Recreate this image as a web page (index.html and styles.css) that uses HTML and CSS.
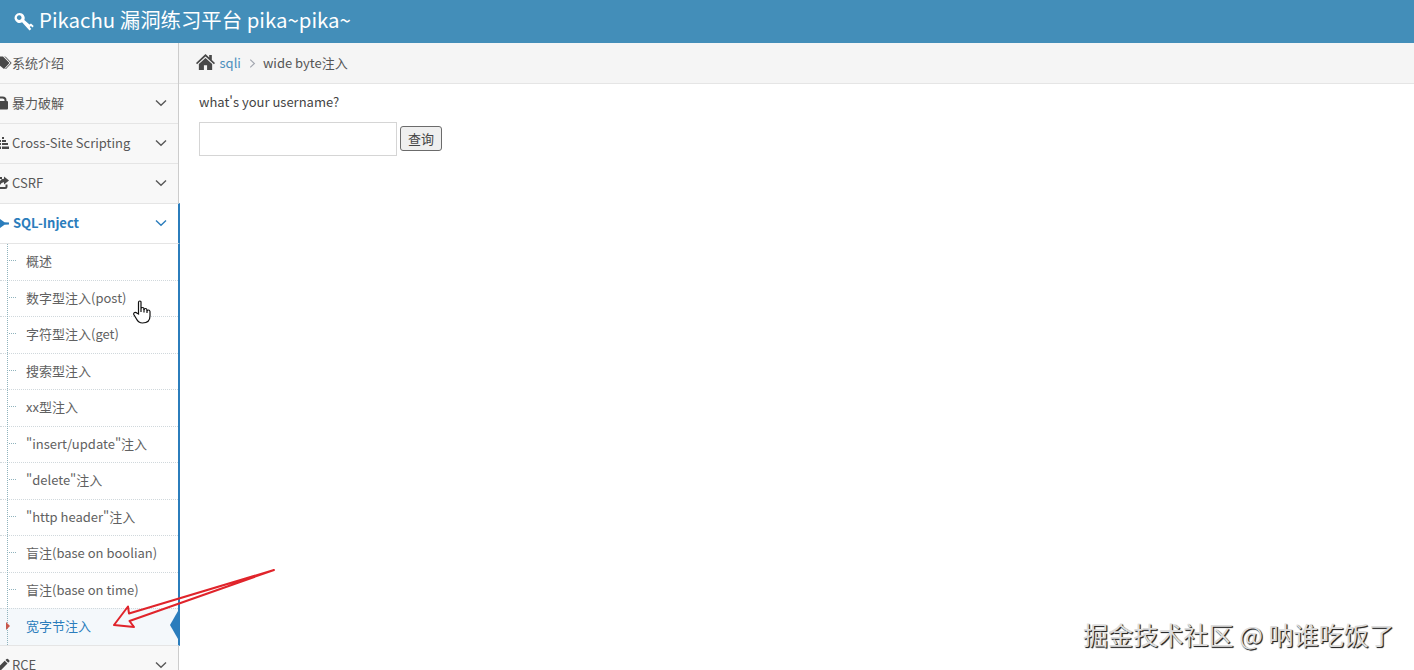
FILE: index.html
```html
<!DOCTYPE html>
<html lang="zh-CN">
<head>
    <meta charset="UTF-8">
    <meta name="viewport" content="width=device-width, initial-scale=1.0">
    <title>Get the pikachu</title>
    <link rel="stylesheet" href="styles.css">
</head>
<body>

    <div class="navbar">
        <svg class="key" viewBox="0 0 20 20"><path fill-rule="evenodd" d="M6 1a5 5 0 1 0 2.600 9.300l7.400 8.200 1.800-1.600-1.600-1.800 1.300-1.200 1.500 1.500 1.200-1.300-2.700-2.500-1.500.9-5.200-4.500A5 5 0 0 0 6 1zM5.600 3.300a2.300 2.300 0 0 1 1.900 3.700 2.300 2.300 0 1 1-1.900-3.700z"/></svg>
        <span>Pikachu 漏洞练习平台 pika~pika~</span>
    </div>

    <div class="main">
        <div class="sidebar">
            <div class="item first">
                <svg class="icon" viewBox="0 0 12 14"><path d="M0 .5h3L9.500 7 4 13 0 9.800z"/><path class="line" d="M5 .5L11.200 7l-5.700 6"/></svg>
                <span>系统介绍</span>
            </div>
            <div class="item">
                <svg class="icon" viewBox="0 0 12 14"><path d="M0 5h7q1 0 1 1v6.500q0 1-1 1H0z"/><path class="thick" d="M-1 1.500h3.500Q5.500 1.500 5.500 4v2"/></svg>
                <span>暴力破解</span>
                <svg class="arrow" viewBox="0 0 12 8"><path d="M1 1.500l5 4.700 5-4.700"/></svg>
            </div>
            <div class="item">
                <svg class="icon" viewBox="0 0 12 14"><path d="M2 1h2v2H2zM2 4h4v2H2zM2 7h6v2H2zM2 10.500h7v2.500H2zM0 4h1v2H0zM0 7h1v2H0zM0 10.500h1V13H0z"/></svg>
                <span>Cross-Site Scripting</span>
                <svg class="arrow" viewBox="0 0 12 8"><path d="M1 1.500l5 4.700 5-4.700"/></svg>
            </div>
            <div class="item">
                <svg class="icon" viewBox="0 0 12 14"><path d="M4 .5l5 4-5 4V6.200Q1.500 6 0 9V5q1-2.200 4-2.200z"/><path class="thick" d="M-1 12h6q1.500 0 1.500-1.500V8.500M-1 2h3"/></svg>
                <span>CSRF</span>
                <svg class="arrow" viewBox="0 0 12 8"><path d="M1 1.500l5 4.700 5-4.700"/></svg>
            </div>
            <div class="item active">
                <svg class="icon" viewBox="0 0 12 14"><path d="M0 3l4.500 3.200 4.500.3v2l-4.500.3L0 12z"/></svg>
                <span>SQL-Inject</span>
                <svg class="arrow" viewBox="0 0 12 8"><path d="M1 1.500l5 4.700 5-4.700"/></svg>
            </div>
            <div class="submenu">
                <div class="sub">概述</div>
                <div class="sub">数字型注入(post)</div>
                <div class="sub">字符型注入(get)</div>
                <div class="sub">搜索型注入</div>
                <div class="sub">xx型注入</div>
                <div class="sub">"insert/update"注入</div>
                <div class="sub">"delete"注入</div>
                <div class="sub">"http header"注入</div>
                <div class="sub">盲注(base on boolian)</div>
                <div class="sub">盲注(base on time)</div>
                <div class="sub current">宽字节注入</div>
            </div>
            <div class="item last">
                <svg class="icon" viewBox="0 0 12 14"><path d="M0 7.500l4.700-4.700L7.500 5.600l-7 7H0zM5.500 2L6.500 1q.8-.6 1.500 0l1.200 1.200q.7.700 0 1.500l-1 1z"/></svg>
                <span>RCE</span>
                <svg class="arrow" viewBox="0 0 12 8"><path d="M1 1.500l5 4.700 5-4.700"/></svg>
            </div>
        </div>

        <div class="content">
            <div class="breadcrumb">
                <svg class="home" viewBox="0 0 18 16"><path d="M9 0l3.500 3.300V1H15v4.700L18 8.500l-1 1.100-8-7.200-8 7.200L0 8.500z"/><path d="M9 3.800l6.300 5.600V15h-4.800v-4.500h-3V15H2.700V9.400z"/></svg>
                <a href="#">sqli</a>
                <svg class="sep" viewBox="0 0 6 8"><path d="M1 .5L4.700 4 1 7.500"/></svg>
                <span>wide byte注入</span>
            </div>
            <div class="page">
                <p>what's your username?</p>
                <form class="query">
                    <input type="text" name="name">
                    <button type="button">查询</button>
                </form>
            </div>
        </div>
    </div>

    <svg class="cursor" viewBox="0 0 18 24"><path d="M5.500 14V2.500q0-1.500 1.300-1.500T8 2.500V9q0-1.500 1.500-1.500T11 9v.8q.2-1.300 1.500-1.300T14 10v1q.3-1 1.500-1t1.500 1.500V16q0 7-7.500 7Q5.500 23 3.500 19L.8 14.500q-.4-1.500.8-2t2.200.5z"/><path d="M8 9v3M11 9v3.500M14 10.500V13"/></svg>
    <svg class="pointer" viewBox="0 0 170 64"><path d="M163 4L18 47.500l-1-7L3 59l20 2-4.500-6z"/></svg>
    <div class="watermark">掘金技术社区 @ 呐谁吃饭了</div>

</body>
</html>
```
FILE: styles.css
```css
* {
    box-sizing: border-box;
}
body {
    margin: 0;
    height: 670px;
    overflow: hidden;
    font-family: "Noto Sans CJK SC", sans-serif;
    font-size: 13px;
    color: #444;
    background: #fff;
}
.navbar {
    display: flex;
    align-items: center;
    gap: 5px;
    height: 43px;
    padding: 0 0 5px 13px;
    background: #438eb9;
    color: #fff;
    font-size: 20.4px;
}
.key {
    width: 21px;
    height: 20px;
    margin-top: 5px;
    fill: #fff;
}
.main {
    display: flex;
    height: 627px;
}
.sidebar {
    width: 179px;
    flex: none;
    background: #f8f8f8;
    border-right: 1px solid #ccc;
}
.item {
    display: flex;
    align-items: center;
    height: 40px;
    padding: 0 11px 2px 0;
    line-height: 18px;
    border-bottom: 1px solid #e5e5e5;
    color: #585858;
}
.first {
    height: 41px;
    padding-bottom: 1px;
}
.last {
    padding-bottom: 0;
}
.icon {
    width: 12px;
    height: 14px;
    flex: none;
    fill: #484848;
}
.icon .line {
    fill: none;
    stroke: #484848;
}
.icon .thick {
    fill: none;
    stroke: #484848;
    stroke-width: 2;
}
.arrow {
    width: 12px;
    height: 8px;
    margin-left: auto;
    fill: none;
    stroke: #585858;
    stroke-width: 1.4;
}
.active {
    width: 180px;
    height: 41px;
    margin-top: -1px;
    background: #fff;
    border-top: 1px solid #e5e5e5;
    border-right: 2px solid #2b7dbc;
    color: #2b7dbc;
    font-weight: bold;
}
.active span {
    margin-left: 1px;
}
.active .icon {
    fill: #2b7dbc;
}
.active .arrow {
    stroke: #2b7dbc;
}
.submenu {
    position: relative;
    width: 180px;
    background: #fff;
    border-right: 2px solid #2b7dbc;
    border-bottom: 1px solid #e5e5e5;
}
.submenu::before {
    content: "";
    position: absolute;
    z-index: 1;
    top: 0;
    bottom: 0;
    left: 7px;
    border-left: 1px dotted #8fb3bd;
}
.sub {
    position: relative;
    height: 36.5px;
    padding-left: 26px;
    line-height: 34px;
    color: #616161;
    border-top: 1px dotted #d0d8dc;
}
.sub:first-child {
    height: 35.5px;
    border-top: none;
}
.sub::before {
    content: "";
    position: absolute;
    left: 9px;
    top: 16px;
    width: 7px;
    border-top: 1px dotted #8fb3bd;
}
.current {
    background: #f4f8fb;
    color: #2b7dbc;
}
.current::before {
    z-index: 2;
    left: 6px;
    top: 13px;
    width: 0;
    border: 4px solid transparent;
    border-left-color: #c8574b;
    border-right: none;
}
.current::after {
    content: "";
    position: absolute;
    right: 0;
    top: 2px;
    border: 14px solid transparent;
    border-left: none;
    border-right: 8px solid #2b7dbc;
}
.content {
    flex: 1;
}
.breadcrumb {
    display: flex;
    align-items: center;
    height: 41px;
    padding: 0 0 2px 17px;
    background: #f5f5f5;
    border-bottom: 1px solid #e5e5e5;
    color: #555;
}
.home {
    width: 19px;
    height: 17px;
    margin: 1px 4.500px 0 0;
    fill: #484848;
}
.breadcrumb a {
    color: #4c8fbd;
    text-decoration: none;
}
.sep {
    width: 7px;
    height: 9px;
    margin: 3px 7px 0 8px;
    fill: none;
    stroke: #a2a6af;
}
.page {
    padding: 8px 20px;
}
.page p {
    margin: 0 0 10px;
    line-height: 20px;
}
.query {
    display: flex;
    align-items: center;
    gap: 3px;
}
.query input {
    width: 198px;
    height: 34px;
    border: 1px solid #d5d5d5;
}
.query button {
    width: 42px;
    height: 25px;
    margin-bottom: 1px;
    padding: 0;
    border: 1px solid #6b6b6b;
    border-radius: 3px;
    background: #efefef;
    color: #444;
    font-family: inherit;
    font-size: 13px;
    line-height: 20px;
}
.cursor {
    position: absolute;
    left: 133px;
    top: 300px;
    width: 18px;
    height: 24px;
    fill: #fff;
    stroke: #111;
    stroke-width: 1.2;
}
.pointer {
    position: absolute;
    left: 111px;
    top: 566px;
    width: 170px;
    height: 64px;
    fill: none;
    stroke: #e0242b;
    stroke-width: 2;
    stroke-linejoin: round;
}
.watermark {
    position: absolute;
    right: 20px;
    bottom: 18px;
    font-size: 25.1px;
    color: #ddd;
    text-shadow: 1px 1px 1px #222, 1px 1px 0 #666;
}
```
